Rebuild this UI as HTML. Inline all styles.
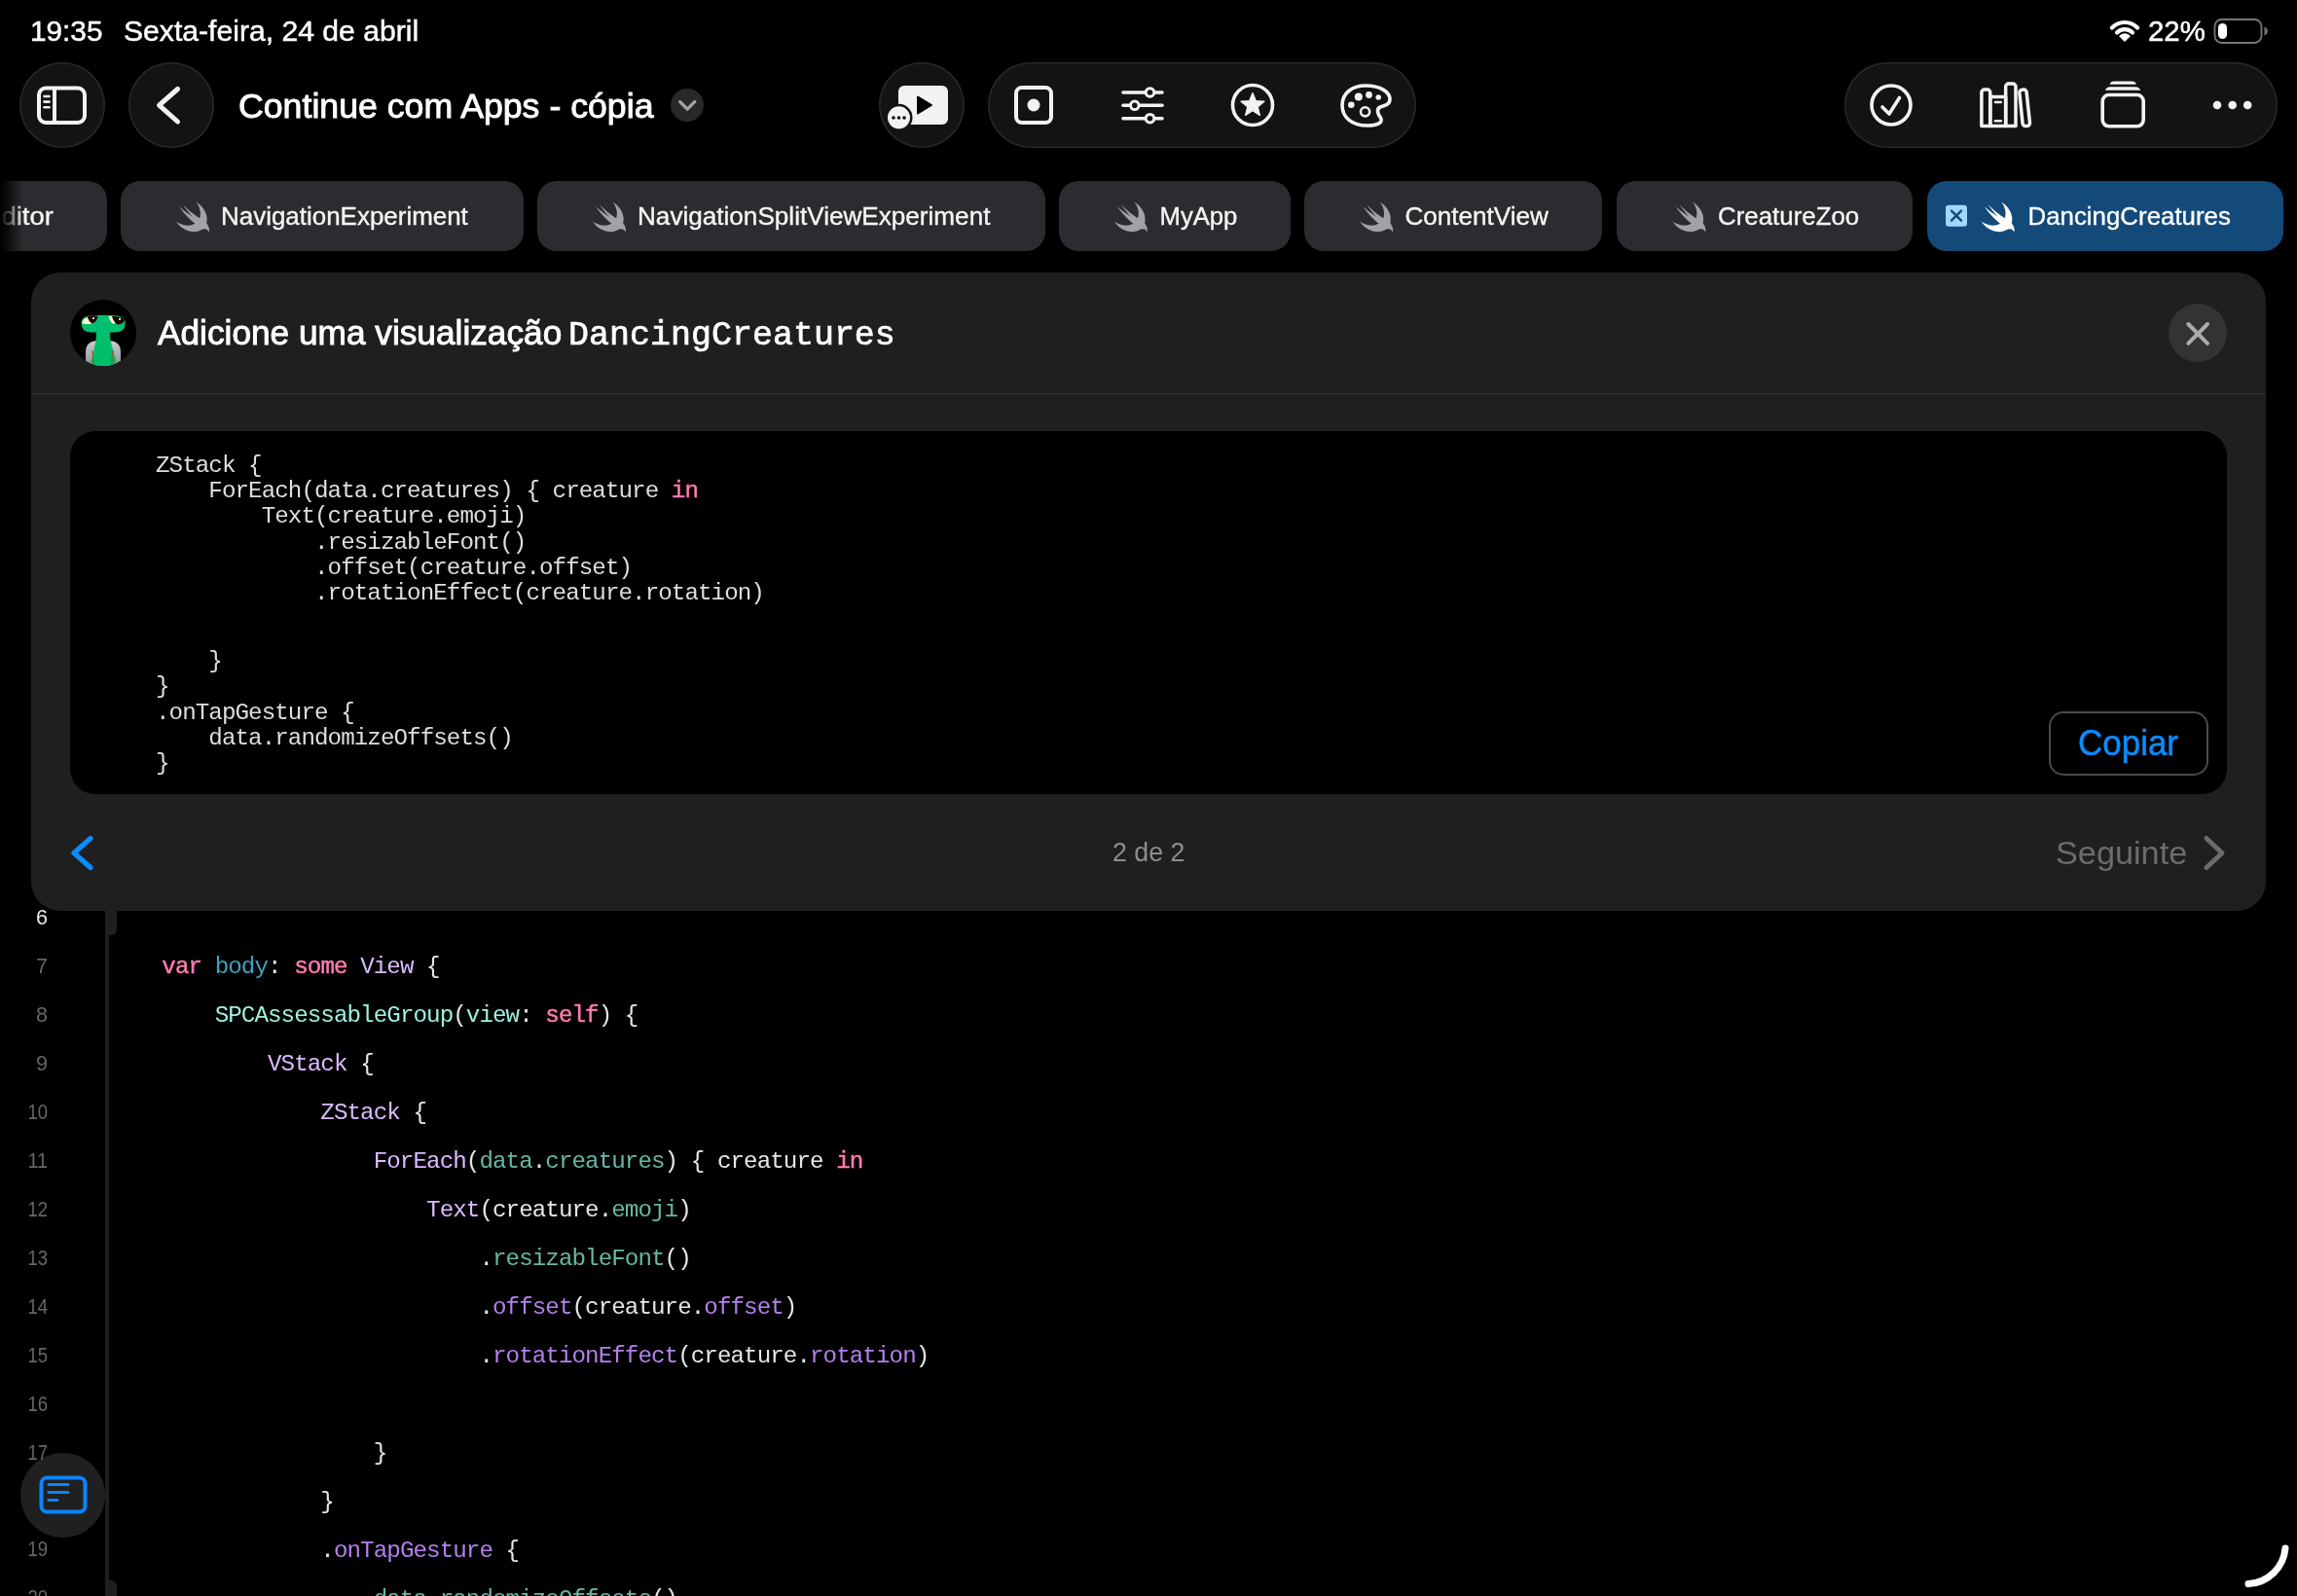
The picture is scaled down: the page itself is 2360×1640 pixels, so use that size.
<!DOCTYPE html>
<html><head><meta charset="utf-8">
<style>
html,body{margin:0;padding:0;background:#000;}
body{width:2360px;height:1640px;overflow:hidden;position:relative;font-family:"Liberation Sans",sans-serif;}
.abs{position:absolute;}
.btn{position:absolute;border-radius:50%;background:#131313;box-shadow:inset 0 0 0 1.5px #282828;}
.pill{position:absolute;border-radius:44px;background:#131313;box-shadow:inset 0 0 0 1.5px #282828;}
.tab{position:absolute;top:186px;height:72px;border-radius:20px;background:#2c2c30;}
svg{position:absolute;left:0;top:0;will-change:transform;}
text{white-space:pre;}
</style></head>
<body>
<!-- toolbar buttons -->
<div class="btn" style="left:20px;top:64px;width:88px;height:88px"></div>
<div class="btn" style="left:132px;top:64px;width:88px;height:88px"></div>
<div class="abs" style="left:689px;top:90.5px;width:34px;height:34px;border-radius:50%;background:#28282a"></div>
<div class="btn" style="left:903px;top:64px;width:88px;height:88px"></div>
<div class="pill" style="left:1015px;top:64px;width:440px;height:88px"></div>
<div class="pill" style="left:1895px;top:64px;width:445px;height:88px"></div>

<!-- tabs -->
<div class="tab" style="left:-20px;width:130px;"></div>
<div class="tab" style="left:124px;width:413.5px;"></div>
<div class="tab" style="left:552px;width:522px;"></div>
<div class="tab" style="left:1088px;width:237.5px;"></div>
<div class="tab" style="left:1340px;width:306px;"></div>
<div class="tab" style="left:1661px;width:303.5px;"></div>
<div class="tab" style="left:1979.5px;width:366px;background:#134a79"></div>

<!-- editor gutter -->
<div class="abs" style="left:108px;top:930px;width:4px;height:710px;background:#1f1f1f"></div>
<div class="abs" style="left:108px;top:930px;width:12px;height:31px;background:#1f1f1f;border-bottom-right-radius:6px"></div>
<div class="abs" style="left:108px;top:1624px;width:12px;height:16px;background:#1f1f1f;border-top-right-radius:6px"></div>

<!-- card -->
<div class="abs" style="left:32px;top:280px;width:2296px;height:656px;border-radius:30px;background:#1f1f1f"></div>
<div class="abs" style="left:32px;top:403.5px;width:2296px;height:1.5px;background:#343436"></div>
<div class="abs" style="left:72px;top:443px;width:2216px;height:373px;border-radius:26px;background:#000"></div>
<div class="abs" style="left:2228px;top:312px;width:60px;height:60px;border-radius:50%;background:#333336"></div>
<div class="abs" style="left:2104.5px;top:730.5px;width:164px;height:66px;border-radius:15px;box-shadow:inset 0 0 0 2px #4a4a4c"></div>

<!-- bottom-left floating button -->
<div class="btn" style="left:20.5px;top:1492.5px;width:87px;height:87px;background:#202020;box-shadow:none"></div>

<svg width="2360" height="1640" viewBox="0 0 2360 1640">
<defs>
<path id="bird" d="M13.543 3.41c4.114 2.47 6.545 7.162 5.549 11.131-.024.093-.05.181-.076.272l.002.001c2.062 2.538 1.5 5.258 1.236 4.745-1.072-2.086-3.066-1.568-4.088-1.043a6.803 6.803 0 0 1-.281.158l-.02.012-.002.002c-2.115 1.123-4.957 1.205-7.812-.022a12.568 12.568 0 0 1-5.64-4.838c.649.48 1.35.902 2.097 1.252 3.019 1.414 6.051 1.311 8.197-.002C9.651 12.73 7.101 9.670 5.146 7.191a10.628 10.628 0 0 1-1.005-1.384c2.34 2.142 6.038 4.83 7.365 5.576C8.69 8.408 6.208 4.743 6.324 4.86c4.436 4.5 8.528 7.047 8.528 7.047.154.086.27.155.36.216.085-.214.16-.436.224-.666.707-2.573-.09-5.498-1.893-7.947z"/>
</defs>

<!-- status bar -->
<g fill="#fff" font-family="Liberation Sans" font-size="29" stroke="#fff" stroke-width="0.45">
<text id="t_time" x="31.0" y="42" font-size="29" textLength="74.45" lengthAdjust="spacingAndGlyphs">19:35</text>
<text id="t_date" x="127.0" y="42" font-size="29" textLength="303.09" lengthAdjust="spacingAndGlyphs">Sexta-feira, 24 de abril</text>
<text id="t_pct" x="2207.0" y="42" font-size="29" textLength="58.89" lengthAdjust="spacingAndGlyphs">22%</text>
</g>
<!-- wifi -->
<g fill="none" stroke="#fff" stroke-width="4.2" stroke-linecap="round">
<path d="M2169.9 28.4 A18.6 18.6 0 0 1 2196.1 28.4"/>
<path d="M2175 33.5 A11.4 11.4 0 0 1 2191 33.5"/>
</g>
<path d="M2183 42.5 L2177.6 37.1 A7.6 7.6 0 0 1 2188.4 37.1 Z" fill="#fff" stroke="#fff" stroke-width="1" stroke-linejoin="round"/>
<!-- battery -->
<rect x="2275.5" y="20" width="48" height="24" rx="7" fill="none" stroke="#777" stroke-width="1.8"/>
<rect x="2279" y="24" width="9" height="16" rx="4.5" fill="#fff"/>
<path d="M2326.5 27.5 q3.3 1.2 3.3 4.5 q0 3.3 -3.3 4.5 z" fill="#777"/>

<!-- sidebar icon -->
<g fill="none" stroke="#f2f2f2" stroke-width="4" stroke-linecap="round">
<rect x="40" y="90.5" width="47" height="35.5" rx="7"/>
<line x1="56" y1="91" x2="56" y2="126"/>
<line x1="45.5" y1="99" x2="50.5" y2="99" stroke-width="2.6"/>
<line x1="45.5" y1="104.6" x2="50.5" y2="104.6" stroke-width="2.6"/>
<line x1="45.5" y1="110.2" x2="50.5" y2="110.2" stroke-width="2.6"/>
</g>
<!-- back chevron -->
<path d="M182.5 91.5 L163.5 108.2 L182.5 125" fill="none" stroke="#f2f2f2" stroke-width="5" stroke-linecap="round" stroke-linejoin="round"/>
<!-- title -->
<text id="t_title" x="245.0" y="120.8" fill="#fff" font-family="Liberation Sans" font-size="35" textLength="426.5" lengthAdjust="spacingAndGlyphs" stroke="#fff" stroke-width="0.9">Continue com Apps - cópia</text>
<path d="M698.7 104.6 L706.2 112.1 L713.7 104.6" fill="none" stroke="#a1a1a6" stroke-width="3.4" stroke-linecap="round" stroke-linejoin="round"/>

<!-- play icon -->
<rect x="923" y="88" width="51" height="40" rx="6" fill="#f2f2f2"/>
<path d="M943 99.5 L957 108 L943 116.5 Z" fill="#000" stroke="#000" stroke-width="2" stroke-linejoin="round"/>
<circle cx="923.5" cy="120.8" r="14" fill="#131313"/>
<circle cx="923.5" cy="120.8" r="11.5" fill="#f2f2f2"/>
<circle cx="918" cy="121" r="1.8" fill="#000"/><circle cx="923.5" cy="121" r="1.8" fill="#000"/><circle cx="929" cy="121" r="1.8" fill="#000"/>

<!-- record icon -->
<rect x="1044" y="90" width="36" height="36" rx="6" fill="none" stroke="#f2f2f2" stroke-width="4"/>
<circle cx="1062" cy="108" r="6.5" fill="#f2f2f2"/>
<!-- sliders -->
<g stroke="#f2f2f2" stroke-width="3.6" stroke-linecap="round" fill="#131313">
<line x1="1154" y1="95" x2="1194" y2="95"/>
<line x1="1154" y1="108.3" x2="1194" y2="108.3"/>
<line x1="1154" y1="121.7" x2="1194" y2="121.7"/>
<circle cx="1181.5" cy="95" r="4.3" stroke-width="3"/>
<circle cx="1165.8" cy="108.3" r="4.3" stroke-width="3"/>
<circle cx="1181.5" cy="121.7" r="4.3" stroke-width="3"/>
</g>
<!-- star circle -->
<circle cx="1287" cy="108" r="20.5" fill="none" stroke="#f2f2f2" stroke-width="3.6"/>
<path fill="#f2f2f2" d="M1287 95.5 L1290.3 103.6 L1299 104.2 L1292.3 109.9 L1294.4 118.4 L1287 113.8 L1279.6 118.4 L1281.7 109.9 L1275 104.2 L1283.7 103.6 Z" stroke="#f2f2f2" stroke-width="1.2" stroke-linejoin="round"/>
<!-- palette -->
<path fill="none" stroke="#f2f2f2" stroke-width="3.6" stroke-linejoin="round" d="M1403 88 C1419 88 1428 95 1428 102 C1428 108 1422 108.5 1418 110 C1413.5 112 1416 118 1418.5 121 C1421.5 126 1415 129 1405 129 C1389 129 1379 121 1379 108 C1379 96 1389 88 1403 88 Z"/>
<g fill="#f2f2f2">
<circle cx="1388.3" cy="107.8" r="3.3"/>
<circle cx="1395.8" cy="99.6" r="4"/>
<circle cx="1406.5" cy="97.5" r="3.4"/>
<circle cx="1416.2" cy="100" r="2.8"/>
</g>
<circle cx="1402.6" cy="114.8" r="4.6" fill="none" stroke="#f2f2f2" stroke-width="2.6"/>

<!-- check circle -->
<circle cx="1943" cy="108" r="20" fill="none" stroke="#f2f2f2" stroke-width="3.6"/>
<path d="M1934 110 L1941 117 L1951.5 100.5" fill="none" stroke="#f2f2f2" stroke-width="3.6" stroke-linecap="round" stroke-linejoin="round"/>
<!-- books -->
<g fill="none" stroke="#f2f2f2" stroke-width="3.5" stroke-linejoin="round">
<path d="M2035.9 129.5 V95 a3 3 0 0 1 3 -3 h2.9 a3 3 0 0 1 3 3 V129.5 Z"/>
<path d="M2044.8 129.5 V99.5 H2060.7 V129.5 Z"/>
<path d="M2060.7 129.5 V89.1 a3 3 0 0 1 3 -3 h4.3 a3 3 0 0 1 3 3 V129.5 Z"/>
<path d="M2074.9 95.4 a3 3 0 0 1 2.7 -3.2 l1.2 -0.15 a3 3 0 0 1 3.3 2.6 l3.4 31.5 a3 3 0 0 1 -2.7 3.3 l-1.4 0.15 a3 3 0 0 1 -3.3 -2.7 Z"/>
</g>
<g stroke="#f2f2f2" stroke-width="2.6" stroke-linecap="round">
<line x1="2050" y1="105" x2="2055.8" y2="105"/>
<line x1="2050" y1="124.2" x2="2055.8" y2="124.2"/>
</g>
<!-- stack -->
<rect x="2160.2" y="97.5" width="42" height="32.3" rx="6.5" fill="none" stroke="#f2f2f2" stroke-width="3.6"/>
<path d="M2163 92.8 Q2164 89.2 2168 89.2 H2194 Q2198 89.2 2199.2 92.8 Z" fill="#f2f2f2"/>
<path d="M2167.6 86.8 Q2168.5 83.5 2172 83.5 H2190.5 Q2194 83.5 2194.8 86.8 Z" fill="#f2f2f2"/>
<!-- dots -->
<g fill="#f2f2f2"><circle cx="2278" cy="108" r="4.3"/><circle cx="2293.7" cy="108" r="4.3"/><circle cx="2309.2" cy="108" r="4.3"/></g>

<!-- tabs text -->
<g font-family="Liberation Sans" font-size="24" fill="#f5f5f5" stroke="#f5f5f5" stroke-width="0.35">
<text id="t_tab1" x="1.5" y="230.8" fill="#f5f5f5" font-size="25" textLength="53.43" lengthAdjust="spacingAndGlyphs">ditor</text>
<text id="t_tab2" x="227.0" y="230.8" font-size="25" textLength="253.84" lengthAdjust="spacingAndGlyphs">NavigationExperiment</text>
<text id="t_tab3" x="655.0" y="230.8" font-size="25" textLength="362.42" lengthAdjust="spacingAndGlyphs">NavigationSplitViewExperiment</text>
<text id="t_tab4" x="1191.5" y="230.8" font-size="25" textLength="79.87" lengthAdjust="spacingAndGlyphs">MyApp</text>
<text id="t_tab5" x="1443.5" y="230.8" font-size="25" textLength="147.35" lengthAdjust="spacingAndGlyphs">ContentView</text>
<text id="t_tab6" x="1765.0" y="230.8" font-size="25" textLength="145.21" lengthAdjust="spacingAndGlyphs">CreatureZoo</text>
<text id="t_tab7" x="2083.5" y="230.8" fill="#fff" font-size="25" textLength="208.39" lengthAdjust="spacingAndGlyphs">DancingCreatures</text>
</g>
<defs><linearGradient id="fadeL" x1="0" y1="0" x2="1" y2="0"><stop offset="0" stop-color="#000" stop-opacity="1"/><stop offset="0.35" stop-color="#000" stop-opacity="0.7"/><stop offset="1" stop-color="#000" stop-opacity="0"/></linearGradient></defs>
<rect x="0" y="186" width="24" height="72" fill="url(#fadeL)"/>
<g fill="#a1a1a6">
<use href="#bird" transform="translate(176.4 201.4) scale(1.88)"/>
<use href="#bird" transform="translate(604.4 201.4) scale(1.88)"/>
<use href="#bird" transform="translate(1140.3 201.4) scale(1.88)"/>
<use href="#bird" transform="translate(1392.6 201.4) scale(1.88)"/>
<use href="#bird" transform="translate(1713.9 201.4) scale(1.88)"/>
<use href="#bird" transform="translate(2031.1 201.4) scale(1.88)" fill="#fff"/>
</g>
<rect x="1999" y="210.7" width="22" height="22" rx="3" fill="#9ed7ff"/>
<path d="M2005 216.7 L2015 226.7 M2015 216.7 L2005 226.7" stroke="#134a79" stroke-width="2.4" stroke-linecap="round"/>

<!-- avatar -->
<defs>
<clipPath id="avc"><circle cx="106" cy="342" r="34"/></clipPath>
<linearGradient id="shell" x1="0" y1="0" x2="0" y2="1"><stop offset="0" stop-color="#c9ccd3"/><stop offset="1" stop-color="#8e9097"/></linearGradient>
</defs>
<circle cx="106" cy="342" r="34" fill="#000"/>
<g clip-path="url(#avc)">
<path d="M88 378 V362 Q88 350 101 350 H111 Q124 350 124 362 V378 Z" fill="url(#shell)"/>
<path d="M99 340 H113 L113.5 350 L118 366 L121 378 H91 L95 366 L98.5 350 Z" fill="#00bf6c"/>
<path d="M83.5 331 Q83.5 341.5 93 341.5 H119 Q128.7 341.5 128.7 331 Q128 326 121 324.5 Q106 323 91 324.5 Q84 326 83.5 331 Z" fill="#00c070"/>
<path d="M84.5 331 Q86 326 92 325.5 L95 332.5 Q89 333.5 84.5 332.5 Z" fill="#fff6cf"/>
<path d="M111.5 324.5 Q118 325 121 328 L117 333 Q113 332 111.5 324.5 Z" fill="#fff6cf"/>
<path d="M89.5 325.5 Q96 323.5 100.5 325 Q99.5 331 94.5 332.5 Q91 330 89.5 325.5 Z" fill="#1e0505"/>
<path d="M115 325 Q123 324.5 128 328.5 Q127 333 121 333.5 Q116.5 331 115 325 Z" fill="#1e0505"/>
<circle cx="96" cy="327" r="1.1" fill="#fff"/>
<circle cx="123" cy="328" r="1.1" fill="#fff"/>
<path d="M94.5 360 Q96.5 368 96 376" stroke="#a8461a" stroke-width="1" fill="none"/>
<path d="M116 360 Q114.5 368 115 376" stroke="#a8461a" stroke-width="1" fill="none"/>
</g>
<!-- card title -->
<text id="t_card" x="162.0" y="353.6" fill="#fff" font-family="Liberation Sans" font-size="35" textLength="415.26" lengthAdjust="spacingAndGlyphs" stroke="#fff" stroke-width="0.9">Adicione uma visualização</text>
<text id="t_cardm" x="584.0" y="353.6" fill="#fff" font-family="Liberation Mono" font-size="35" textLength="335.86" lengthAdjust="spacingAndGlyphs" stroke="#fff" stroke-width="0.7">DancingCreatures</text>
<path d="M2248.3 333 L2268 352.8 M2268 333 L2248.3 352.8" stroke="#ababae" stroke-width="4" stroke-linecap="round"/>

<!-- popup code -->
<g font-family="Liberation Mono" font-size="24.2" letter-spacing="-0.93" fill="#dedede" xml:space="preserve">
<text x="160" y="484.5">ZStack {</text>
<text x="160" y="510.9">    ForEach(data.creatures) { creature <tspan fill="#ff7ab2" stroke="#ff7ab2" stroke-width="0.45">in</tspan></text>
<text x="160" y="537.2">        Text(creature.emoji)</text>
<text x="160" y="563.5">            .resizableFont()</text>
<text x="160" y="589.9">            .offset(creature.offset)</text>
<text x="160" y="616.2">            .rotationEffect(creature.rotation)</text>
<text x="160" y="686">    }</text>
<text x="160" y="712.2">}</text>
<text x="160" y="738.5">.onTapGesture {</text>
<text x="160" y="764.8">    data.randomizeOffsets()</text>
<text x="160" y="791">}</text>
</g>
<text stroke="#0a8cff" stroke-width="0.5" id="t_copiar" x="2135.0" y="775.5" fill="#0a8cff" font-family="Liberation Sans" font-size="36" textLength="103.0" lengthAdjust="spacingAndGlyphs">Copiar</text>

<!-- footer -->
<path d="M93 861.5 L76 876.5 L93 891.5" fill="none" stroke="#0a8cff" stroke-width="5.2" stroke-linecap="round" stroke-linejoin="round"/>
<text id="t_pg" x="1143.0" y="885.3" fill="#8e8e8e" font-family="Liberation Sans" font-size="27.5" textLength="74.41" lengthAdjust="spacingAndGlyphs">2 de 2</text>
<text id="t_seg" x="2112.0" y="888" fill="#6c6c6c" font-family="Liberation Sans" font-size="34" textLength="135.26" lengthAdjust="spacingAndGlyphs">Seguinte</text>
<path d="M2267 861.5 L2283 876.5 L2267 891.5" fill="none" stroke="#6c6c6c" stroke-width="5" stroke-linecap="round" stroke-linejoin="round"/>

<!-- line numbers -->
<g font-family="Liberation Sans" font-size="21.5" fill="#66666a" text-anchor="end">
<text x="49" y="950.2" fill="#e8e8e8">6</text>
<text x="49" y="1000">7</text>
<text x="49" y="1050">8</text>
<text x="49" y="1100">9</text>
<text textLength="20.6" lengthAdjust="spacingAndGlyphs" x="49" y="1150">10</text>
<text textLength="20.6" lengthAdjust="spacingAndGlyphs" x="49" y="1200">11</text>
<text textLength="20.6" lengthAdjust="spacingAndGlyphs" x="49" y="1250">12</text>
<text textLength="20.6" lengthAdjust="spacingAndGlyphs" x="49" y="1300">13</text>
<text textLength="20.6" lengthAdjust="spacingAndGlyphs" x="49" y="1350">14</text>
<text textLength="20.6" lengthAdjust="spacingAndGlyphs" x="49" y="1399.8">15</text>
<text textLength="20.6" lengthAdjust="spacingAndGlyphs" x="49" y="1449.8">16</text>
<text textLength="20.6" lengthAdjust="spacingAndGlyphs" x="49" y="1499.8">17</text>
<text textLength="20.6" lengthAdjust="spacingAndGlyphs" x="49" y="1599.4">19</text>
<text textLength="20.6" lengthAdjust="spacingAndGlyphs" x="49" y="1649.4">20</text>
</g>

<!-- editor code -->
<g font-family="Liberation Mono" font-size="24.2" letter-spacing="-0.93" fill="#e6e6e6" xml:space="preserve">
<text x="112" y="1000">    <tspan fill="#ff7ab2" stroke="#ff7ab2" stroke-width="0.45">var</tspan> <tspan fill="#41a1c0">body</tspan>: <tspan fill="#ff7ab2" stroke="#ff7ab2" stroke-width="0.45">some</tspan> <tspan fill="#dabaff">View</tspan> {</text>
<text x="112" y="1050">        <tspan fill="#9ef1dd">SPCAssessableGroup</tspan>(<tspan fill="#9ef1dd">view</tspan>: <tspan fill="#ff7ab2" stroke="#ff7ab2" stroke-width="0.45">self</tspan>) {</text>
<text x="112" y="1100">            <tspan fill="#dabaff">VStack</tspan> {</text>
<text x="112" y="1150">                <tspan fill="#dabaff">ZStack</tspan> {</text>
<text x="112" y="1200">                    <tspan fill="#dabaff">ForEach</tspan>(<tspan fill="#67b7a4">data</tspan>.<tspan fill="#67b7a4">creatures</tspan>) { creature <tspan fill="#ff7ab2" stroke="#ff7ab2" stroke-width="0.45">in</tspan></text>
<text x="112" y="1250">                        <tspan fill="#dabaff">Text</tspan>(creature.<tspan fill="#67b7a4">emoji</tspan>)</text>
<text x="112" y="1300">                            .<tspan fill="#67b7a4">resizableFont</tspan>()</text>
<text x="112" y="1350">                            .<tspan fill="#b281eb">offset</tspan>(creature.<tspan fill="#b281eb">offset</tspan>)</text>
<text x="112" y="1400">                            .<tspan fill="#b281eb">rotationEffect</tspan>(creature.<tspan fill="#b281eb">rotation</tspan>)</text>
<text x="112" y="1500">                    }</text>
<text x="112" y="1550">                }</text>
<text x="112" y="1600">                .<tspan fill="#b281eb">onTapGesture</tspan> {</text>
<text x="112" y="1650">                    <tspan fill="#67b7a4">data</tspan>.<tspan fill="#67b7a4">randomizeOffsets</tspan>()</text>
</g>

<!-- floating button icon -->
<rect x="42.5" y="1518.5" width="45" height="35" rx="6" fill="none" stroke="#0a84ff" stroke-width="4"/>
<g stroke="#0a84ff" stroke-width="3" stroke-linecap="round">
<line x1="50" y1="1525.5" x2="70" y2="1525.5"/>
<line x1="50" y1="1533.5" x2="70" y2="1533.5"/>
<line x1="50" y1="1541.5" x2="59" y2="1541.5"/>
</g>

<!-- corner arc -->
<path d="M2348 1591 A40 40 0 0 1 2310 1627.5" fill="none" stroke="#fff" stroke-width="7" stroke-linecap="round"/>
</svg>
</body></html>
